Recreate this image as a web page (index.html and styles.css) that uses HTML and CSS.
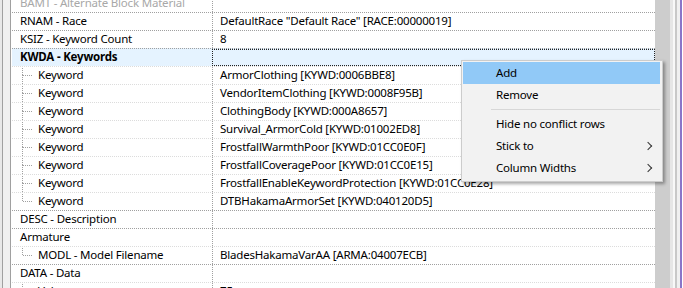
FILE: index.html
```html
<!DOCTYPE html>
<html>
<head>
    <title>Record View</title>
    <meta name="viewport" content="width=device-width, initial-scale=1">
    <link rel="stylesheet" href="styles.css">
</head>
<body>
    <div class="window">
        <div class="gutter"></div>
        <div class="tree">
            <div class="row disabled"><div class="name">BAMT - Alternate Block Material</div><div class="value"></div></div>
            <div class="row"><div class="name">RNAM - Race</div><div class="value">DefaultRace "Default Race" [RACE:00000019]</div></div>
            <div class="row"><div class="name">KSIZ - Keyword Count</div><div class="value">8</div></div>
            <div class="row selected"><div class="name">KWDA - Keywords</div><div class="value focus"></div></div>
            <div class="row child"><div class="name"><span class="twig"></span>Keyword</div><div class="value">ArmorClothing [KYWD:0006BBE8]</div></div>
            <div class="row child"><div class="name"><span class="twig"></span>Keyword</div><div class="value">VendorItemClothing [KYWD:0008F95B]</div></div>
            <div class="row child"><div class="name"><span class="twig"></span>Keyword</div><div class="value">ClothingBody [KYWD:000A8657]</div></div>
            <div class="row child"><div class="name"><span class="twig"></span>Keyword</div><div class="value">Survival_ArmorCold [KYWD:01002ED8]</div></div>
            <div class="row child"><div class="name"><span class="twig"></span>Keyword</div><div class="value">FrostfallWarmthPoor [KYWD:01CC0E0F]</div></div>
            <div class="row child"><div class="name"><span class="twig"></span>Keyword</div><div class="value">FrostfallCoveragePoor [KYWD:01CC0E15]</div></div>
            <div class="row child"><div class="name"><span class="twig"></span>Keyword</div><div class="value">FrostfallEnableKeywordProtection [KYWD:01CC0E28]</div></div>
            <div class="row child"><div class="name"><span class="twig last"></span>Keyword</div><div class="value">DTBHakamaArmorSet [KYWD:040120D5]</div></div>
            <div class="row"><div class="name">DESC - Description</div><div class="value"></div></div>
            <div class="row"><div class="name">Armature</div><div class="value"></div></div>
            <div class="row child"><div class="name"><span class="twig last"></span>MODL - Model Filename</div><div class="value">BladesHakamaVarAA [ARMA:04007ECB]</div></div>
            <div class="row"><div class="name">DATA - Data</div><div class="value"></div></div>
            <div class="row child"><div class="name"><span class="twig"></span>Value</div><div class="value">75</div></div>
        </div>
        <div class="scroll"></div>
        <div class="edge"></div>
    </div>

    <div class="menu">
        <div class="item active">Add</div>
        <div class="item">Remove</div>
        <div class="separator"></div>
        <div class="item">Hide no conflict rows</div>
        <div class="item sub">Stick to</div>
        <div class="item sub">Column Widths</div>
    </div>
</body>
</html>
```

FILE: styles.css
```css
* {
    box-sizing: border-box;
}

body {
    margin: 0;
    padding: 0;
    font-family: "Noto Sans", Arial, sans-serif;
    font-size: 11.5px;
    letter-spacing: -0.2px;
    color: #000;
    background-color: #fff;
}

.window {
    display: flex;
    height: 288px;
    overflow: hidden;
}

.gutter {
    width: 12px;
    flex: none;
    background-color: #f0f0f0;
    border-left: 2px solid #e8e8e8;
    box-shadow: inset 1px 0 0 #a0a0a0, inset -1px 0 0 #fff, inset -2px 0 0 #a0a0a0;
}

.tree {
    width: 643px;
    flex: none;
    margin-top: -6px;
}

.row {
    display: grid;
    grid-template-columns: 200px 1fr;
    height: 18px;
    border-top: 1px dotted #a0a0a0;
    line-height: 16px;
}

.row.child {
    border-top-color: #dcdcdc;
}

.row.disabled {
    color: #a8a8a8;
}

.row.selected {
    background-color: #e5f3ff;
    font-weight: bold;
}

.name {
    display: flex;
    align-items: stretch;
    padding-left: 8px;
    white-space: nowrap;
    overflow: hidden;
}

.child .name {
    padding-left: 10px;
}

.value {
    border-left: 1px dotted #a0a0a0;
    padding-left: 7px;
    white-space: nowrap;
    overflow: hidden;
}

.value.focus {
    border: 1px dotted #222;
}

.twig {
    display: flex;
    flex-direction: column;
    width: 10px;
    margin-right: 6px;
    margin-top: -1px;
    height: 18px;
}

.twig::before {
    content: "";
    height: 9px;
    border-left: 1px dotted #a0a0a0;
}

.twig::after {
    content: "";
    flex: 1;
    border-left: 1px dotted #a0a0a0;
    border-top: 1px dotted #a0a0a0;
}

.twig.last::after {
    border-left: none;
    margin-left: 1px;
}

.scroll {
    width: 15px;
    flex: none;
    background-color: #cdcdcd;
}

.edge {
    width: 13px;
    flex: none;
    background: linear-gradient(to right,
        #e6e6e6 0, #e6e6e6 3px,
        #f8f8f8 3px, #f8f8f8 5px,
        #c8c8c8 5px, #c8c8c8 7px,
        #f0f0f0 7px, #f0f0f0 10px,
        #8a75c8 10px, #8a75c8 12px,
        #fff 12px);
}

.menu {
    position: absolute;
    left: 461px;
    top: 60px;
    width: 202px;
    padding: 1px 2px 2px 1px;
    background-color: #f2f2f2;
    border: 1px solid #cccccc;
    box-shadow: 2px 2px 3px rgba(0, 0, 0, 0.35);
}

.item {
    position: relative;
    height: 22px;
    line-height: 22px;
    padding-left: 33px;
}

.item.active {
    background-color: #91c9f7;
}

.item.sub::after {
    content: "";
    position: absolute;
    right: 9px;
    top: 8px;
    width: 5px;
    height: 5px;
    border-top: 1px solid #333;
    border-right: 1px solid #333;
    transform: rotate(45deg);
}

.separator {
    height: 1px;
    margin: 3px 0 3px 28px;
    background-color: #d7d7d7;
}
```
